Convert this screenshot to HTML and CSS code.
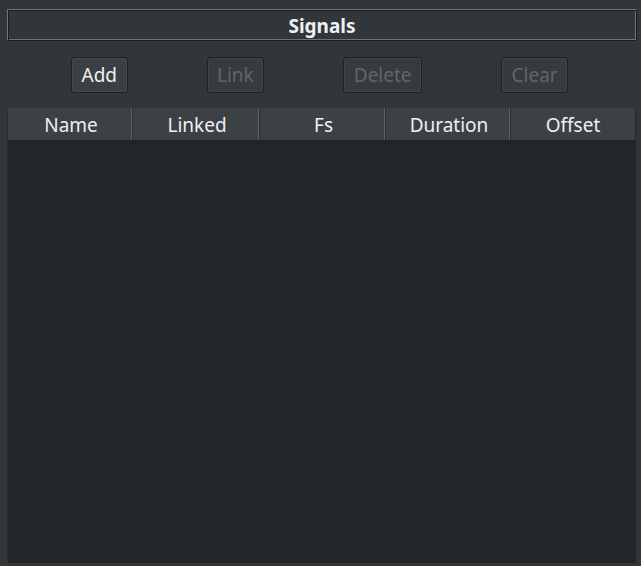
FILE: index.html
```html
<!DOCTYPE html>
<html>
<head>
<meta charset="utf-8">
<link rel="stylesheet" href="styles.css">
</head>
<body>
<div class="panel">
  <div class="title">Signals</div>
  <div class="toolbar">
    <button class="btn">Add</button>
    <button class="btn" disabled>Link</button>
    <button class="btn" disabled>Delete</button>
    <button class="btn" disabled>Clear</button>
  </div>
  <div class="table">
    <div class="thead">
      <div class="th">Name</div>
      <div class="th">Linked</div>
      <div class="th">Fs</div>
      <div class="th">Duration</div>
      <div class="th last">Offset</div>
    </div>
    <div class="tbody"></div>
  </div>
</div>
</body>
</html>
```
FILE: styles.css
```css
html, body {
  margin: 0;
  padding: 0;
  background: #31363b;
  height: 566px;
  overflow: hidden;
}
.panel {
  font-family: "Noto Sans", "Open Sans", sans-serif;
  font-size: 19px;
  color: #eff0f1;
  padding: 9px 4px 0 7px;
  display: flex;
  flex-direction: column;
}
.title {
  width: 630px;
  height: 32px;
  box-sizing: border-box;
  border: 1px solid;
  border-color: #6b737b #1b1e20 #1b1e20 #6b737b;
  box-shadow: inset 1px 1px 0 #1b1e20, inset -1px -1px 0 #6b737b;
  display: flex;
  align-items: center;
  justify-content: center;
  font-weight: bold;
  line-height: 1;
  padding-top: 3px;
}
.toolbar {
  display: flex;
  gap: 79px;
  padding: 16px 0 0 64px;
  height: 36px;
}
.btn {
  font: inherit;
  color: #eff0f1;
  background: #3b4045;
  border: 1px solid #1e2124;
  border-radius: 3px;
  padding: 0 9.5px;
  height: 36px;
  line-height: 1;
  box-shadow: inset 0 0 0 1px #454a50;
}
.btn:disabled {
  color: #5f666d;
  background: #363b40;
  box-shadow: inset 0 0 0 1px #3f444a;
}
.table {
  margin: 15px 0 0 1px;
  width: 628px;
  height: 455px;
  display: flex;
  flex-direction: column;
  background: #232629;
  box-shadow: -1px 0 0 #2a2e32;
}
.thead {
  display: flex;
  height: 32px;
  background: #3c4146;
  border-bottom: 1px solid #1f2225;
  border-right: 1px solid #25292c;
}
.th {
  width: 124px;
  box-sizing: border-box;
  display: flex;
  align-items: center;
  justify-content: center;
  border-right: 1px solid #5a6168;
  box-shadow: 1px 0 0 #2b2f33;
  line-height: 1;
  padding-top: 3px;
  padding-left: 3px;
}
.th:nth-child(1) { width: 124px; }
.th:nth-child(2) { width: 126px; margin-left: 1px; }
.th:nth-child(3) { width: 125px; margin-left: 1px; }
.th:nth-child(4) { width: 124px; margin-left: 1px; }
.th.last { flex: 1; border-right: none; box-shadow: none; margin-left: 1px; padding-left: 0; }
.tbody {
  flex: 1;
  background: #232629;
}
```
